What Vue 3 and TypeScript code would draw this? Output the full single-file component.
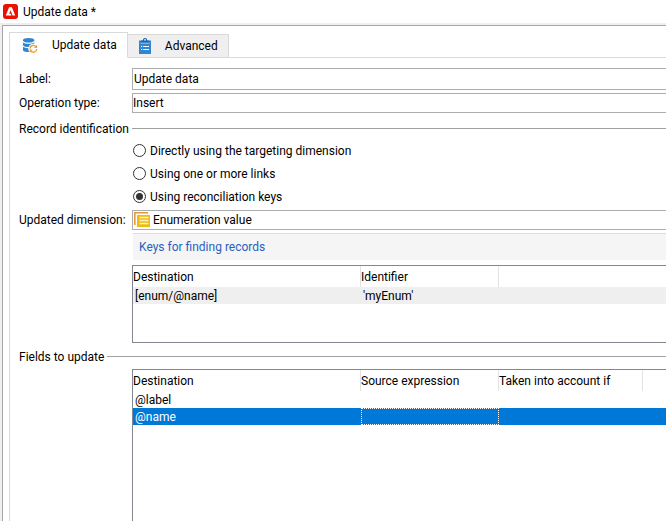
<script setup lang="ts">
import { ref } from 'vue'

interface KeyRow {
  destination: string
  identifier: string
}

interface FieldRow {
  destination: string
  source: string
  condition: string
}

const activeTab = ref<'update' | 'advanced'>('update')
const label = ref('Update data')
const operation = ref('Insert')
const dimension = ref('Enumeration value')
const identification = ref('keys')
const selectedField = ref('@name')

const modes = [
  { value: 'targeting', text: 'Directly using the targeting dimension' },
  { value: 'links', text: 'Using one or more links' },
  { value: 'keys', text: 'Using reconciliation keys' },
]

const keys: KeyRow[] = [{ destination: '[enum/@name]', identifier: "'myEnum'" }]

const fields: FieldRow[] = [
  { destination: '@label', source: '', condition: '' },
  { destination: '@name', source: '', condition: '' },
]
</script>

<template>
  <div class="window">
    <header class="titlebar">
      <svg class="logo" viewBox="0 0 15 15" aria-hidden="true">
        <rect width="15" height="15" rx="3" fill="#eb1000" />
        <path d="M6.1 3.3h2.8l3.3 8.3H9.6L7.5 6.3 6.2 9.7h1.6l.8 1.9H2.8z" fill="#fff" />
      </svg>
      <h1 class="title">Update data *</h1>
    </header>

    <div class="frame">
      <div class="tabs" role="tablist">
        <button
          class="tab"
          :class="{ active: activeTab === 'update' }"
          type="button"
          role="tab"
          :aria-selected="activeTab === 'update'"
          @click="activeTab = 'update'"
        >
          <svg class="tab-icon" viewBox="0 0 18 18" aria-hidden="true">
            <path d="M1 3.2v10.6C1 15.2 3.8 16 7 16s6-.8 6-2.2V3.2z" fill="#2f86d2" />
            <ellipse cx="7" cy="3.2" rx="6" ry="2.2" fill="#2f86d2" />
            <path d="M1 4.6c1.5 2.6 10.5 2.6 12 0M1 9.3c1.5 2.6 10.5 2.6 12 0" fill="none" stroke="#fff" stroke-width="1.2" />
            <circle cx="12" cy="12.5" r="5.4" fill="#fff" />
            <path d="M8.3 12.3a3.7 3.7 0 0 1 6.6-2M15.7 12.7a3.7 3.7 0 0 1-6.6 2" fill="none" stroke="#f0a033" stroke-width="1.5" />
            <path d="M16 8.3v3.4h-3.4zM8 16.7v-3.4h3.4z" fill="#f0a033" />
          </svg>
          <span>Update data</span>
        </button>
        <button
          class="tab"
          :class="{ active: activeTab === 'advanced' }"
          type="button"
          role="tab"
          :aria-selected="activeTab === 'advanced'"
          @click="activeTab = 'advanced'"
        >
          <svg class="tab-icon clip" viewBox="0 0 14 16" aria-hidden="true">
            <path d="M1 2.5h12V16H1z" fill="#2f86d2" />
            <path d="M3 2.5h2v-1a2 1.5 0 0 1 4 0v1h2v2.3H3z" fill="#1d64ad" />
            <path d="M2.5 5.2h9" stroke="#9fc8ee" stroke-width="1" />
            <circle cx="7" cy="1.9" r=".8" fill="#fff" />
            <path d="M3 8.5h1.2M5.2 8.5H11M3 11.5h1.2M5.2 11.5H11" stroke="#fff" stroke-width="1" />
          </svg>
          <span>Advanced</span>
        </button>
      </div>

      <form class="panel" @submit.prevent>
        <div class="row">
          <label for="label">Label:</label>
          <input id="label" v-model="label" class="field tall" type="text" />
        </div>
        <div class="row">
          <label for="operation">Operation type:</label>
          <select id="operation" v-model="operation" class="field">
            <option>Insert</option>
          </select>
        </div>

        <h2 id="record" class="section">Record identification</h2>
        <div class="modes" role="radiogroup" aria-labelledby="record">
          <label v-for="mode in modes" :key="mode.value" class="mode">
            <input v-model="identification" type="radio" name="mode" :value="mode.value" />
            <span>{{ mode.text }}</span>
          </label>
        </div>

        <div class="row">
          <label for="dimension">Updated dimension:</label>
          <div class="field with-icon">
            <svg class="enum-icon" viewBox="0 0 16 16" aria-hidden="true">
              <path d="M.8 13V.8H14" fill="none" stroke="#e8963c" stroke-width="1.6" />
              <path d="M3 3h13v12H3z" fill="#edbd16" />
              <path d="M5.5 5.5h9M5.5 8.5h9M5.5 11.5h9" stroke="#fff3bd" stroke-width="1.5" />
            </svg>
            <input id="dimension" v-model="dimension" type="text" />
          </div>
        </div>

        <div class="keys">
          <div class="keys-bar"><a href="#keys">Keys for finding records</a></div>
          <div id="keys" class="grid">
            <table>
              <colgroup>
                <col class="c1" />
                <col class="c2" />
                <col />
              </colgroup>
              <thead>
                <tr>
                  <th>Destination</th>
                  <th>Identifier</th>
                  <td></td>
                </tr>
              </thead>
              <tbody>
                <tr v-for="row in keys" :key="row.destination" class="shaded">
                  <td>{{ row.destination }}</td>
                  <td>{{ row.identifier }}</td>
                  <td></td>
                </tr>
              </tbody>
            </table>
          </div>
        </div>

        <h2 class="section fields-title">Fields to update</h2>
        <div class="grid fill">
          <table>
            <colgroup>
              <col class="c1" />
              <col class="c2" />
              <col class="c3" />
              <col />
            </colgroup>
            <thead>
              <tr>
                <th>Destination</th>
                <th>Source expression</th>
                <th>Taken into account if</th>
                <td></td>
              </tr>
            </thead>
            <tbody>
              <tr
                v-for="row in fields"
                :key="row.destination"
                :class="{ selected: row.destination === selectedField }"
                @click="selectedField = row.destination"
              >
                <td>{{ row.destination }}</td>
                <td class="source">{{ row.source }}</td>
                <td>{{ row.condition }}</td>
                <td></td>
              </tr>
            </tbody>
          </table>
        </div>
      </form>
    </div>
  </div>
</template>

<style>
body {
  margin: 0;
  background: #fff;
}
</style>

<style scoped>
.window {
  display: flex;
  flex-direction: column;
  box-sizing: border-box;
  min-height: 100vh;
  overflow: hidden;
  color: #000;
  font: 12px/16px Roboto, "Noto Sans", sans-serif;
}
.window * {
  box-sizing: border-box;
}
.titlebar {
  display: flex;
  align-items: center;
  gap: 5px;
  height: 23px;
  padding-left: 3px;
}
.logo {
  width: 15px;
  height: 15px;
}
.title,
.section {
  margin: 0;
  font: inherit;
}
.frame {
  display: flex;
  flex: 1;
  flex-direction: column;
  margin: 2px 0 0 2px;
  padding: 6px 0 0 6px;
  border-top: 1px solid #a5a7ab;
  border-left: 1px solid #a5a7ab;
  box-shadow: 0 0 0 2px #efeff0;
}
.tabs {
  display: flex;
  align-items: flex-end;
  height: 26px;
  border-bottom: 1px solid #d9d9d9;
}
.tab {
  display: flex;
  align-items: center;
  height: 24px;
  margin-bottom: -1px;
  padding: 0 10px;
  border: 1px solid #d9d9d9;
  border-left: 0;
  border-radius: 0;
  background: #efefef;
  color: inherit;
  font: inherit;
  gap: 13px;
}
.tab.active {
  height: 26px;
  padding: 0 10px 0 12px;
  border-left: 1px solid #d9d9d9;
  border-bottom-color: #fff;
  background: #fff;
}
.tab-icon {
  width: 17px;
  height: 17px;
}
.tab-icon.clip {
  width: 14px;
  height: 16px;
}
.panel {
  display: flex;
  flex: 1;
  flex-direction: column;
  padding: 10px 0 0 9px;
  border-left: 1px solid #d9d9d9;
}
.row {
  display: grid;
  grid-template-columns: 113px 1fr;
  align-items: center;
  white-space: nowrap;
}
.row + .row {
  margin-top: 3px;
}
.field {
  width: 100%;
  height: 20px;
  margin: 0;
  padding: 0;
  border: 1px solid #abadb0;
  border-right: 0;
  border-radius: 0;
  outline: 0;
  appearance: none;
  background: #fff;
  color: inherit;
  font: inherit;
}
.field.tall {
  height: 22px;
  padding: 0 1px;
}
.with-icon {
  display: flex;
  align-items: center;
  gap: 3px;
  padding-left: 1px;
}
.with-icon input {
  flex: 1;
  min-width: 0;
  height: 16px;
  padding: 0;
  border: 0;
  outline: 0;
  background: transparent;
  color: inherit;
  font: inherit;
}
.enum-icon {
  width: 16px;
  height: 16px;
}
.section {
  display: flex;
  align-items: center;
  gap: 3px;
  height: 19px;
  margin: 6px 0 1px;
}
.section.fields-title {
  margin: 4px 0 3px;
}
.section::after {
  flex: 1;
  height: 1px;
  background: #a0a0a0;
  content: "";
}
.modes {
  display: grid;
  margin: 0 0 2px 114px;
}
.mode {
  display: flex;
  align-items: center;
  gap: 4px;
  height: 23px;
}
.mode input {
  display: grid;
  place-content: center;
  width: 13px;
  height: 13px;
  margin: 0;
  border: 1px solid #333;
  border-radius: 50%;
  appearance: none;
  background: #fff;
}
.mode input:checked::before {
  width: 7px;
  height: 7px;
  border-radius: 50%;
  background: #333;
  content: "";
}
.keys {
  margin: 3px 0 0 113px;
}
.keys-bar {
  height: 27px;
  margin: 0 0 5px 1px;
  padding: 5px 6px;
  border-top: 1px solid #dcdcdc;
  background: #f5f5f5;
}
.keys-bar a {
  color: #2b5fbd;
  text-decoration: none;
}
.grid {
  min-height: 78px;
  border: 1px solid #828790;
  border-right: 0;
}
.grid.fill {
  flex: 1;
  margin-left: 113px;
  border-bottom: 0;
}
table {
  width: 100%;
  border-spacing: 0;
  table-layout: fixed;
}
.c1 {
  width: 228px;
}
.c2 {
  width: 138px;
}
.c3 {
  width: 144px;
}
th,
td {
  padding: 0 2px;
  font-weight: 400;
  text-align: left;
  white-space: nowrap;
}
th {
  height: 21px;
  padding: 0;
  border-right: 1px solid #e2e2e2;
}
tbody td {
  height: 17px;
}
.shaded {
  background: #efefef;
}
.selected {
  background: #0078d7;
  color: #fff;
}
.selected .source {
  outline: 1px dotted #fff;
  outline-offset: -1px;
}
</style>
